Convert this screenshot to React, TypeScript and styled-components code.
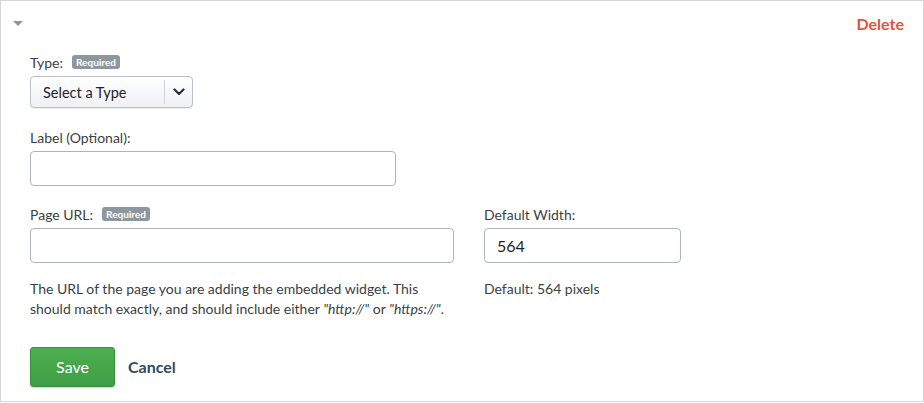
import styled, { createGlobalStyle } from 'styled-components';

const GlobalStyle = createGlobalStyle`
  html, body {
    margin: 0;
    padding: 0;
    background: #ffffff;
  }
  body {
    font-family: 'Lato', 'Liberation Sans', sans-serif;
    color: #333a40;
  }
  * {
    box-sizing: border-box;
  }
`;

const Panel = styled.div`
  width: 924px;
  height: 402px;
  border: 1px solid #d6d6d6;
  background: #fff;
  display: flex;
  flex-direction: column;
`;

const Header = styled.div`
  display: flex;
  justify-content: space-between;
  align-items: center;
  height: 44px;
  padding: 0 19px 0 11px;
`;

const Caret = styled.span`
  width: 0;
  height: 0;
  margin: 1px 0 0 1px;
  border-left: 5px solid transparent;
  border-right: 5px solid transparent;
  border-top: 5px solid #8a969f;
`;

const DeleteLink = styled.a`
  font-size: 16px;
  font-weight: 700;
  color: #e3533d;
  cursor: pointer;
`;

const Body = styled.div`
  padding: 8px 29px 0;
  display: flex;
  flex-direction: column;
`;

const Field = styled.div<{ mb?: number }>`
  display: flex;
  flex-direction: column;
  margin-bottom: ${(p) => p.mb ?? 0}px;
`;

const LabelRow = styled.div`
  display: flex;
  align-items: center;
  gap: 9px;
  height: 18px;
  margin-bottom: 5px;
  font-size: 14px;
  color: #3a3f44;
`;

const Badge = styled.span`
  background: #8d979f;
  color: #fff;
  font-size: 10px;
  font-weight: 700;
  border-radius: 3px;
  padding: 2px 4px;
  line-height: 10px;
`;

const SelectBox = styled.div`
  width: 163px;
  height: 32px;
  border: 1px solid #b9c0c6;
  border-radius: 4px;
  background: linear-gradient(#ffffff, #eef0f2);
  box-shadow: 0 1px 1px rgba(0, 0, 0, 0.08);
  display: flex;
  align-items: center;
`;

const SelectText = styled.span`
  flex: 1;
  padding-left: 12px;
  font-size: 14.5px;
  color: #1f2327;
`;

const SelectDivider = styled.span`
  width: 1px;
  height: 24px;
  background: #cfd4d8;
`;

const SelectArrow = styled.span`
  width: 27px;
  display: flex;
  justify-content: center;
  color: #2a2f33;
`;

const TextInput = styled.input<{ w: number }>`
  width: ${(p) => p.w}px;
  height: 35px;
  border: 1px solid #aeb5bb;
  border-radius: 4px;
  padding: 0 12px;
  font-family: inherit;
  font-size: 16px;
  color: #1b1f24;
  outline: none;
`;

const Columns = styled.div`
  display: flex;
  gap: 30px;
`;

const Hint = styled.p`
  margin: 16px 0 0;
  font-size: 14px;
  line-height: 20px;
  color: #3a3f44;

  em {
    font-style: italic;
  }
`;

const Actions = styled.div`
  display: flex;
  align-items: center;
  gap: 13px;
  margin-top: 28px;
`;

const SaveButton = styled.button`
  width: 85px;
  height: 40px;
  padding: 0 0 2px;
  border: 1px solid #3a9140;
  border-radius: 3px;
  background: linear-gradient(#4caf50, #3f9e44);
  box-shadow: 0 1px 2px rgba(0, 0, 0, 0.2);
  color: #fff;
  font-family: inherit;
  font-size: 16px;
  cursor: pointer;
`;

const CancelLink = styled.a`
  margin-bottom: 2px;
  font-size: 16px;
  font-weight: 700;
  color: #2f4a5c;
  cursor: pointer;
`;

const Chevron = () => (
  <svg width="12" height="8" viewBox="0 0 12 8" fill="none">
    <path d="M1.5 1.5L6 6L10.5 1.5" stroke="currentColor" strokeWidth="2.2" strokeLinecap="round" strokeLinejoin="round" />
  </svg>
);

export default function App() {
  return (
    <>
      <GlobalStyle />
      <Panel>
        <Header>
          <Caret />
          <DeleteLink>Delete</DeleteLink>
        </Header>
        <Body>
          <Field mb={20}>
            <LabelRow>
              Type: <Badge>Required</Badge>
            </LabelRow>
            <SelectBox>
              <SelectText>Select a Type</SelectText>
              <SelectDivider />
              <SelectArrow>
                <Chevron />
              </SelectArrow>
            </SelectBox>
          </Field>
          <Field mb={19}>
            <LabelRow>Label (Optional):</LabelRow>
            <TextInput w={366} />
          </Field>
          <Columns>
            <Field>
              <LabelRow>
                Page URL: <Badge>Required</Badge>
              </LabelRow>
              <TextInput w={424} />
              <Hint>
                The URL of the page you are adding the embedded widget. This
                <br />
                should match exactly, and should include either <em>"http://"</em> or <em>"https://"</em>.
              </Hint>
            </Field>
            <Field>
              <LabelRow>Default Width:</LabelRow>
              <TextInput w={197} defaultValue="564" />
              <Hint>Default: 564 pixels</Hint>
            </Field>
          </Columns>
          <Actions>
            <SaveButton>Save</SaveButton>
            <CancelLink>Cancel</CancelLink>
          </Actions>
        </Body>
      </Panel>
    </>
  );
}
